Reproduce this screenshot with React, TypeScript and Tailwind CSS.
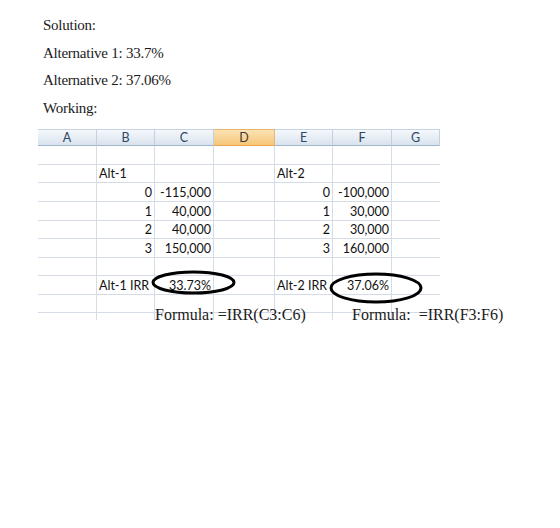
import React from "react";

type Cell = { text: string; align?: "left" | "right" };
type Row = { h: string; cells: Record<number, Cell>; last?: boolean };

const colW = ["w-[59px]", "w-[58px]", "w-[59px]", "w-[61px]", "w-[58px]", "w-[59px]", "w-[48px]"];
const headers = ["A", "B", "C", "D", "E", "F", "G"];

const rows: Row[] = [
  { h: "h-[19px]", cells: {} },
  { h: "h-[18px]", cells: { 1: { text: "Alt-1" }, 4: { text: "Alt-2" } } },
  {
    h: "h-[19px]",
    cells: {
      1: { text: "0", align: "right" },
      2: { text: "-115,000", align: "right" },
      4: { text: "0", align: "right" },
      5: { text: "-100,000", align: "right" },
    },
  },
  {
    h: "h-[19px]",
    cells: {
      1: { text: "1", align: "right" },
      2: { text: "40,000", align: "right" },
      4: { text: "1", align: "right" },
      5: { text: "30,000", align: "right" },
    },
  },
  {
    h: "h-[18px]",
    cells: {
      1: { text: "2", align: "right" },
      2: { text: "40,000", align: "right" },
      4: { text: "2", align: "right" },
      5: { text: "30,000", align: "right" },
    },
  },
  {
    h: "h-[19px]",
    cells: {
      1: { text: "3", align: "right" },
      2: { text: "150,000", align: "right" },
      4: { text: "3", align: "right" },
      5: { text: "160,000", align: "right" },
    },
  },
  { h: "h-[18px]", cells: {} },
  {
    h: "h-[19px]",
    cells: {
      1: { text: "Alt-1 IRR" },
      2: { text: "33.73%", align: "right" },
      4: { text: "Alt-2 IRR" },
      5: { text: "37.06%", align: "right" },
    },
  },
  { h: "h-[18px]", cells: {} },
  { h: "h-[7px]", cells: {}, last: true },
];

function HeaderRow() {
  return (
    <div className="flex h-[17px]">
      {headers.map((label, i) => {
        const active = label === "D";
        return (
          <div
            key={label}
            className={[
              colW[i],
              "flex items-center justify-center border-t border-b border-r text-[12.5px] leading-[16px]",
              active
                ? "bg-linear-to-b from-[#fbe2b4] to-[#f5c677] border-t-[#e6b46a] border-b-[#f0a24c] border-r-[#e7b875] text-[#3c3a36]"
                : "bg-linear-to-b from-[#f5f8fc] to-[#d9e3ee] border-t-[#c5d3e2] border-b-[#9fb5cc] border-r-[#c2d0df] text-[#2d4766]",
            ].join(" ")}
          >
            {label}
          </div>
        );
      })}
    </div>
  );
}

function BodyRow({ row }: { row: Row }) {
  return (
    <div className={["flex", row.h, row.last ? "" : "border-b border-[#d5dce7]"].join(" ")}>
      {headers.map((_, i) => {
        const cell = row.cells[i];
        return (
          <div
            key={i}
            className={[
              colW[i],
              "flex h-full items-end overflow-visible whitespace-nowrap text-[12.5px] leading-[16px] text-[#111]",
              i < 6 ? "border-r border-[#d5dce7]" : "",
              cell?.align === "right" ? "justify-end pr-[2px]" : "justify-start pl-[2px]",
            ].join(" ")}
          >
            {cell ? cell.text : ""}
          </div>
        );
      })}
    </div>
  );
}

export default function App() {
  return (
    <div className="h-[528px] w-[560px] overflow-hidden bg-white">
      <div className="pl-[43px] pt-[12px] font-['Liberation_Serif',serif] text-[15px] leading-[27.5px] tracking-[-0.25px] text-[#1b1b1b]">
        <p>Solution:</p>
        <p>Alternative 1: 33.7%</p>
        <p>Alternative 2: 37.06%</p>
        <p>Working:</p>
      </div>

      <div className="relative ml-[38px] mt-[7px] w-[402px] font-['Lato',sans-serif]">
        <HeaderRow />
        {rows.map((row, i) => (
          <BodyRow key={i} row={row} />
        ))}

        {/* hand-drawn rings around the two IRR results */}
        <svg
          className="pointer-events-none absolute left-0 top-0"
          width="402"
          height="191"
          viewBox="0 0 402 191"
        >
          <ellipse cx="155.5" cy="153.5" rx="40.5" ry="10.5" fill="none" stroke="#000" strokeWidth="3" />
          <ellipse cx="338" cy="159" rx="45" ry="14" fill="none" stroke="#000" strokeWidth="3" />
        </svg>

        <div className="absolute left-[117px] top-[178px] whitespace-pre font-['Liberation_Serif',serif] text-[16px] leading-[16px] text-[#1b1b1b]">
          Formula: =IRR(C3:C6)
        </div>
        <div className="absolute left-[314px] top-[178px] whitespace-pre font-['Liberation_Serif',serif] text-[16px] leading-[16px] text-[#1b1b1b]">
          Formula:  =IRR(F3:F6)
        </div>
      </div>
    </div>
  );
}
